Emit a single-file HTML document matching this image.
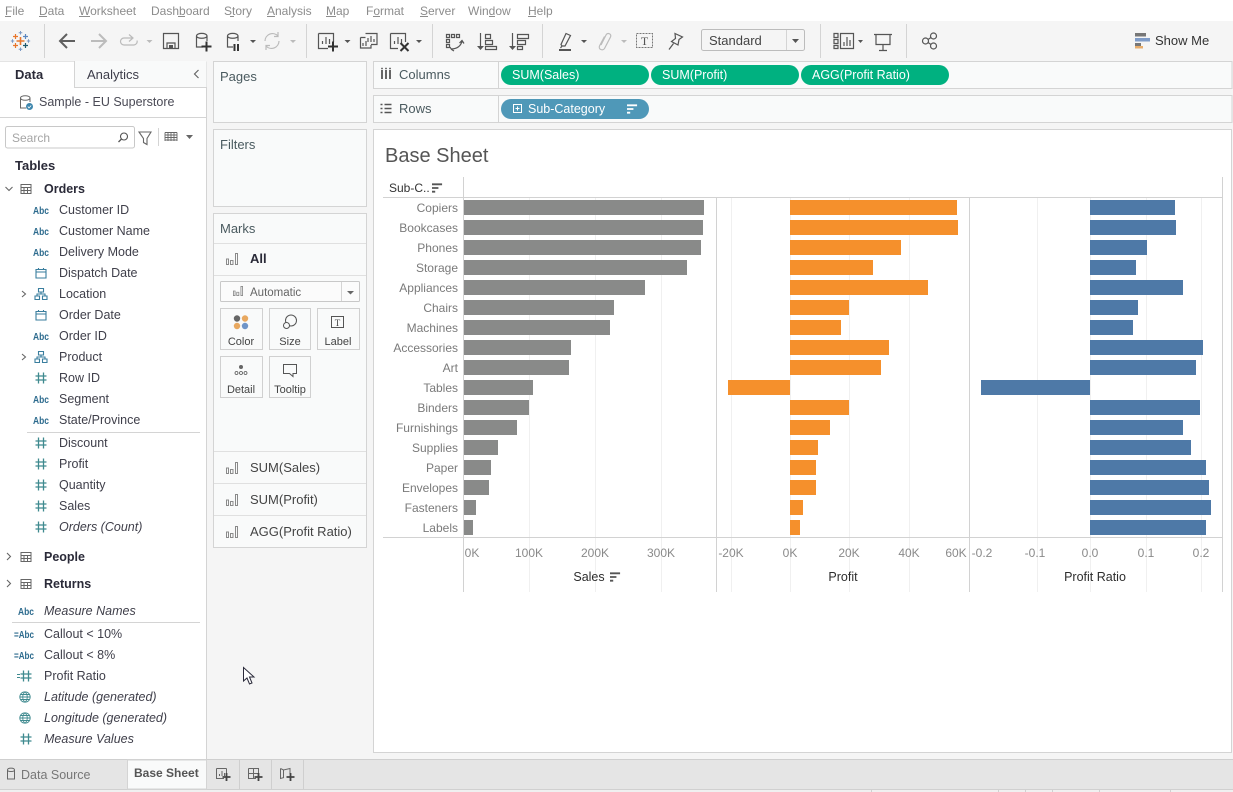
<!DOCTYPE html>
<html><head><meta charset="utf-8"><title>Base Sheet</title>
<style>
html,body{margin:0;padding:0;background:#f5f5f5;overflow:hidden}
svg{display:block}
text{font-family:"Liberation Sans",sans-serif;font-size:13px;fill:#444}
.m{font-size:12px;fill:#8c8c8c}
.f{font-size:12.5px;fill:#3f3f4a}
.i{font-style:italic}
.b{font-weight:bold;fill:#2a2a38}
.abc{font-size:10px;fill:#2d6b8e;font-weight:bold}
.cat{font-size:12px;fill:#7a7a7a;text-anchor:end}
.tk{font-size:12px;fill:#8a8a8a;text-anchor:middle}
.ax{font-size:12.5px;fill:#2e2e2e;text-anchor:middle}
.p{font-size:12.5px;fill:#fff}
.mk{font-size:11px;fill:#444;text-anchor:middle}
.ln{stroke:#d4d4d4;stroke-width:1;fill:none}
.gr{stroke:#f0f0f0;stroke-width:1}
.ic{fill:none;stroke:#555;stroke-width:1.2}
.lg{fill:none;stroke:#bbb;stroke-width:1.2}
</style></head><body>
<svg width="1233" height="792" viewBox="0 0 1233 792" xmlns="http://www.w3.org/2000/svg">
<defs>
<symbol id="hash" viewBox="0 0 12 12" overflow="visible"><path d="M3.500 .5V11.500M8.500 .5V11.500M.5 4H11.500M.5 8H11.500" fill="none" stroke="#3f8a8f" stroke-width="1.300"/></symbol>
<symbol id="cal" viewBox="0 0 12 12" overflow="visible"><path d="M1 2.500H11V11H1ZM1 5H11M3.500 1V3M8.500 1V3" fill="none" stroke="#3a7e9e" stroke-width="1.100"/></symbol>
<symbol id="hier" viewBox="0 0 12 12" overflow="visible"><path d="M3.500 .5H8.500V4H3.500ZM0 8H4.500V11.500H0ZM7.500 8H12V11.500H7.500ZM6 4V6M2 8V6H10V8" fill="none" stroke="#3a7e9e" stroke-width="1.100"/></symbol>
<symbol id="tbl" viewBox="0 0 12 12" overflow="visible"><path d="M1 1.500H11V10.500H1ZM1 4.500H11M1 7.500H11M4 4.500V10.500M7.500 4.500V10.500" fill="none" stroke="#666" stroke-width="1"/></symbol>
<symbol id="glb" viewBox="0 0 12 12" overflow="visible"><path d="M6 .8A5.200 5.200 0 1 0 6 11.200A5.200 5.200 0 1 0 6 .8ZM.8 6H11.200M6 .8C3 3.500 3 8.500 6 11.200C9 8.500 9 3.500 6 .8M1.500 3.500H10.500M1.500 8.500H10.500" fill="none" stroke="#3f8a8f" stroke-width=".9"/></symbol>
<symbol id="mbar" viewBox="0 0 12 12" overflow="visible"><path d="M.5 6H2.500V11.500H.5ZM4.500 7.500H7V11.500H4.500ZM9.500 .5H11.500V11.500H9.500Z" fill="none" stroke="#8a8a8a" stroke-width="1"/></symbol>
<symbol id="srt" viewBox="0 0 12 10" overflow="visible"><path d="M0 0H11V2H0ZM0 4H7V6H0ZM0 8H3.500V10H0Z" fill="currentColor"/></symbol>
</defs>

<!-- Base -->
<rect width="1233" height="792" fill="#f5f5f5"/>
<rect width="1233" height="21" fill="#fff"/>

<!-- Menu -->
<g class="menu">
<text class="m" x="5" y="15">File</text><path d="M5 16.500H11" stroke="#8c8c8c"/>
<text class="m" x="39" y="15">Data</text><path d="M39 16.500H47" stroke="#8c8c8c"/>
<text class="m" x="79" y="15">Worksheet</text><path d="M79 16.500H90" stroke="#8c8c8c"/>
<text class="m" x="151" y="15">Dashboard</text><path d="M178 16.500H185" stroke="#8c8c8c"/>
<text class="m" x="224" y="15">Story</text><path d="M230 16.500H234" stroke="#8c8c8c"/>
<text class="m" x="267" y="15">Analysis</text><path d="M267 16.500H275" stroke="#8c8c8c"/>
<text class="m" x="326" y="15">Map</text><path d="M326 16.500H336" stroke="#8c8c8c"/>
<text class="m" x="366" y="15">Format</text><path d="M373 16.500H380" stroke="#8c8c8c"/>
<text class="m" x="420" y="15">Server</text><path d="M420 16.500H428" stroke="#8c8c8c"/>
<text class="m" x="468" y="15">Window</text><path d="M489 16.500H495" stroke="#8c8c8c"/>
<text class="m" x="528" y="15">Help</text><path d="M528 16.500H536" stroke="#8c8c8c"/>
</g>

<!-- Toolbar separators -->
<path class="ln" d="M44.500 24V58M306.500 24V58M432.500 24V58M542.500 24V58M820.500 24V58M906.500 24V58"/>

<!-- Logo -->
<g fill="none">
<path d="M20.500 37V45M16.500 41H24.500" stroke="#e8762b" stroke-width="1.600"/>
<path d="M15.500 34V39M13 36.500H18M15.500 43V48M13 45.500H18" stroke="#e8762b" stroke-width="1.200"/>
<path d="M25.500 34V39M23 36.500H28" stroke="#5b87c0" stroke-width="1.200"/>
<path d="M25.500 43V48M23 45.500H28" stroke="#1f5a6e" stroke-width="1.200"/>
<path d="M20.500 31V34.500M18.700 32.700H22.300M20.500 47.500V51M18.700 49.300H22.300M12.500 39.300V42.700M10.800 41H14.200M28.500 39.300V42.700M26.800 41H30.200" stroke="#7b99c4" stroke-width="1"/>
</g>

<!-- Nav -->
<path d="M75 41H60M67 34L60 41L67 48" fill="none" stroke="#5f5f5f" stroke-width="2"/>
<path d="M91 41H106M99 34L106 41L99 48" fill="none" stroke="#bcbcbc" stroke-width="2"/>
<path class="lg" d="M132 38H124a3.500 3.500 0 0 0 0 7H134a3.500 3.500 0 0 0 3-4.500M129 34.500L133 38L129 41.500"/>
<path d="M146.500 40H152.500L149.500 43Z" fill="#bbb"/>
<!-- Save -->
<path class="ic" d="M163.500 33.500H178.500V48.500H163.500ZM167 48V43H175V48"/><rect x="169" y="45" width="4" height="3" fill="#555"/>
<!-- Add DS -->
<path class="ic" d="M196.500 36V47H203M207 36V41M196.500 36C196.500 32.500 207 32.500 207 36C207 39 196.500 39 196.500 36Z"/>
<path d="M206.500 41.500V51.500M201.500 46.500H211.500" stroke="#333" stroke-width="2"/>
<!-- Pause DS -->
<path class="ic" d="M227.500 36V47H233M238 36V41M227.500 36C227.500 32.500 238 32.500 238 36C238 39 227.500 39 227.500 36Z"/>
<path d="M234.500 44V51M238 44V51" stroke="#333" stroke-width="2"/>
<path d="M250 40H256L253 43Z" fill="#555"/>
<!-- Refresh -->
<path class="lg" d="M265 41a7.500 7.500 0 0 1 13-5M279 41a7.500 7.500 0 0 1-13 5M278 32V36.500H274M266 50V45.500H270"/>
<path d="M290 40H296L293 43Z" fill="#bbb"/>
<!-- New sheet -->
<path class="ic" d="M318.500 33.500H333.500V42M328 48.500H318.500V33.500M322.500 44V41M326 44V37M329.500 44V39"/>
<path d="M333 41.500V51.500M328 46.500H338" stroke="#333" stroke-width="2"/>
<path d="M344.500 40H350.500L347.500 43Z" fill="#555"/>
<!-- Duplicate -->
<path class="ic" d="M365.500 33.500H377V44.500H371M360.500 37.500H365.500M360.500 37.500V48H371V45M368 42V38M371 42V36M374 42V39M363 46V43M366 46V41"/>
<!-- Clear -->
<path class="ic" d="M390.500 33.500H405.500V42M398 48.500H390.500V33.500M394.500 44V41M398 44V37M401.500 44V39"/>
<path d="M400.500 43L408.500 51M408.500 43L400.500 51" stroke="#333" stroke-width="2"/>
<path d="M416 40H422L419 43Z" fill="#555"/>
<!-- Swap -->
<path class="ic" d="M446.500 34.500h3v3h-3zM451.500 34.500h3v3h-3zM456.500 34.500h3v3h-3zM446.500 39.500h3v3h-3zM446.500 44.500h3v3h-3zM451 49C457 49 461 46 462 41M459.500 43L462 40.500L464 43.500M450 47L451.500 49.500L454 51"/>
<!-- Sort asc -->
<path class="ic" d="M480.500 33V47"/><path d="M477 46H484L480.500 50Z" fill="#555"/>
<path class="ic" d="M485.500 34.500H490.500V38.500H485.500ZM485.500 40.500H492.500V44.500H485.500ZM485.500 46.500H496.500V49.500H485.500Z"/>
<!-- Sort desc -->
<path class="ic" d="M512.500 33V47"/><path d="M509 46H516L512.500 50Z" fill="#555"/>
<path class="ic" d="M517.500 34.500H528.500V38.500H517.500ZM517.500 40.500H525.500V44.500H517.500ZM517.500 46.500H522.500V49.500H517.500Z"/>
<!-- Highlight -->
<path class="ic" d="M562 46L561 44.500L566 33.500L570.500 35.500L565 46ZM562 46L560.500 48"/>
<rect x="559" y="49" width="12" height="2" fill="#555"/>
<path d="M581 40H587L584 43Z" fill="#555"/>
<!-- Clip -->
<path class="lg" d="M601 45L606 35C607.500 32 612 34 610.500 37L604.500 48.500C603 51 598 49.500 599.500 46L604.500 36.500"/>
<path d="M621 40H627L624 43Z" fill="#bbb"/>
<!-- T -->
<rect x="636.500" y="33.500" width="16" height="14" fill="none" stroke="#777" stroke-dasharray="2 1"/>
<text x="644.500" y="45" text-anchor="middle" style="font-family:'Liberation Serif',serif;font-size:12px;fill:#555">T</text>
<!-- Pin -->
<path class="ic" d="M675 33.500L682.500 37L679 39.500L678 45L671.500 41.500L675.500 38.500ZM673.500 43.500L669 49.500"/>
<!-- Standard -->
<rect x="701.500" y="29.500" width="103" height="21" rx="2" fill="#f5f5f5" stroke="#bcbcbc"/>
<path class="ln" d="M786.500 30V50"/>
<text x="709" y="45" style="fill:#444">Standard</text>
<path d="M792 39H799L795.500 43Z" fill="#555"/>
<!-- Fit -->
<path class="ic" d="M834 33.500h4v4h-4zM834 39.500h4v4h-4zM834 45.500h4v3h-4zM840.500 33.500H853.500V48.500H840.500ZM844 46V42M847 46V37M850 46V40"/>
<path d="M858 40H863L860.500 43Z" fill="#555"/>
<!-- Presentation -->
<path class="ic" d="M874 34.500H892M876 34.500V44.500H890V34.500M883 44.500V50M879 50.500H887"/>
<!-- Share -->
<g class="ic"><circle cx="925.500" cy="41" r="3"/><circle cx="933.500" cy="36" r="3"/><circle cx="933.500" cy="46" r="3"/><path d="M928 39.500L931 37.500M928 42.500L931 44.500"/></g>
<!-- Show Me -->
<rect x="1135" y="33" width="11" height="3.500" fill="#777"/>
<rect x="1135" y="38" width="15" height="3.500" fill="#7f9cc8"/>
<rect x="1135" y="43" width="6" height="3" fill="#777"/>
<rect x="1135" y="46" width="8" height="2.500" fill="#e8ad6b"/>
<text x="1155" y="45" style="fill:#333">Show Me</text>

<!-- Left panel -->
<rect x="0" y="61" width="206" height="698" fill="#fff"/>
<path d="M206.500 61V759" stroke="#d4d4d4"/>
<path d="M0 61.500H207" stroke="#e4e4e4"/>
<rect x="74.500" y="61" width="132" height="26" fill="#f9fafa"/>
<path class="ln" d="M74.500 61V87.500H206"/>
<text x="15" y="79" class="b" style="font-size:13px">Data</text>
<text x="87" y="79" style="fill:#3d3d4a">Analytics</text>
<path d="M198.500 70L194.500 74L198.500 78" fill="none" stroke="#666" stroke-width="1.200"/>
<!-- Source -->
<path d="M20.500 98V108H26M30 98V102M20.500 98C20.500 95 30 95 30 98C30 101 20.500 101 20.500 98Z" fill="none" stroke="#666"/>
<circle cx="29.500" cy="106.500" r="3.500" fill="#3d86ad"/>
<path d="M27.800 106.500L29 108L31.200 105.500" stroke="#fff" fill="none" stroke-width=".8"/>
<text x="39" y="106" style="font-size:12.500px;fill:#4a4a55">Sample - EU Superstore</text>
<path class="ln" d="M0 117.500H206"/>
<!-- Search -->
<rect x="5.500" y="126.500" width="129" height="21.500" rx="2" fill="#fff" stroke="#c8c8c8"/>
<text x="12" y="142" style="font-size:12px;fill:#a5a5a5">Search</text>
<circle cx="124" cy="136.500" r="3.500" fill="none" stroke="#555" stroke-width="1.100"/>
<path d="M121.500 139L118.500 142" fill="none" stroke="#555" stroke-width="1.300"/>
<path d="M139 132H151L147 138.500V144.500L143.500 142.500V138.500Z" fill="none" stroke="#666" stroke-width="1.100"/>
<path class="ln" d="M158.500 128V146"/>
<path d="M165 132.500H177M165 135H177M165 137.500H177M165 140H177M165 132.500V141M168 132.500V141M171 132.500V141M174 132.500V141M177 132.500V141" stroke="#666" stroke-width=".9" fill="none"/>
<path d="M186 135H193L189.500 139Z" fill="#666"/>
<text x="15" y="170" class="b" style="font-size:13px">Tables</text>
<path d="M5.500 187L9 190.500L12.500 187" fill="none" stroke="#666" stroke-width="1.100"/>
<use href="#tbl" x="20" y="183" width="12" height="12"/>
<text x="44" y="193" class="b" style="font-size:12.500px">Orders</text>

<!-- Fields -->
<text class="abc" x="33" y="214" textLength="16" lengthAdjust="spacingAndGlyphs">Abc</text><text class="f" x="59" y="214">Customer ID</text>
<text class="abc" x="33" y="235" textLength="16" lengthAdjust="spacingAndGlyphs">Abc</text><text class="f" x="59" y="235">Customer Name</text>
<text class="abc" x="33" y="256" textLength="16" lengthAdjust="spacingAndGlyphs">Abc</text><text class="f" x="59" y="256">Delivery Mode</text>
<use href="#cal" x="35" y="267" width="12" height="12"/><text class="f" x="59" y="277">Dispatch Date</text>
<path d="M22 291L25.500 294L22 297" fill="none" stroke="#666" stroke-width="1.100"/>
<use href="#hier" x="35" y="288" width="12" height="12"/><text class="f" x="59" y="298">Location</text>
<use href="#cal" x="35" y="309" width="12" height="12"/><text class="f" x="59" y="319">Order Date</text>
<text class="abc" x="33" y="340" textLength="16" lengthAdjust="spacingAndGlyphs">Abc</text><text class="f" x="59" y="340">Order ID</text>
<path d="M22 354L25.500 357L22 360" fill="none" stroke="#666" stroke-width="1.100"/>
<use href="#hier" x="35" y="351" width="12" height="12"/><text class="f" x="59" y="361">Product</text>
<use href="#hash" x="35" y="372" width="12" height="12"/><text class="f" x="59" y="382">Row ID</text>
<text class="abc" x="33" y="403" textLength="16" lengthAdjust="spacingAndGlyphs">Abc</text><text class="f" x="59" y="403">Segment</text>
<text class="abc" x="33" y="424" textLength="16" lengthAdjust="spacingAndGlyphs">Abc</text><text class="f" x="59" y="424">State/Province</text>
<path class="ln" d="M27 432.500H200"/>
<use href="#hash" x="35" y="437" width="12" height="12"/><text class="f" x="59" y="447">Discount</text>
<use href="#hash" x="35" y="458" width="12" height="12"/><text class="f" x="59" y="468">Profit</text>
<use href="#hash" x="35" y="479" width="12" height="12"/><text class="f" x="59" y="489">Quantity</text>
<use href="#hash" x="35" y="500" width="12" height="12"/><text class="f" x="59" y="510">Sales</text>
<use href="#hash" x="35" y="521" width="12" height="12"/><text class="f i" x="59" y="531">Orders (Count)</text>

<path d="M7 553L10.500 556.500L7 560" fill="none" stroke="#666" stroke-width="1.100"/>
<use href="#tbl" x="20" y="551" width="12" height="12"/>
<text x="44" y="561" class="b" style="font-size:12.500px">People</text>
<path d="M7 580L10.500 583.500L7 587" fill="none" stroke="#666" stroke-width="1.100"/>
<use href="#tbl" x="20" y="578" width="12" height="12"/>
<text x="44" y="588" class="b" style="font-size:12.500px">Returns</text>

<text class="abc" x="18" y="615" textLength="16" lengthAdjust="spacingAndGlyphs">Abc</text><text class="f i" x="44" y="615">Measure Names</text>
<path class="ln" d="M12 622.500H200"/>
<text class="abc" x="14" y="638" textLength="20" lengthAdjust="spacingAndGlyphs">=Abc</text><text class="f" x="44" y="638">Callout &lt; 10%</text>
<text class="abc" x="14" y="659" textLength="20" lengthAdjust="spacingAndGlyphs">=Abc</text><text class="f" x="44" y="659">Callout &lt; 8%</text>
<path d="M17 674.500H20M17 677.500H20" stroke="#3f8a8f"/>
<use href="#hash" x="20" y="670" width="12" height="12"/><text class="f" x="44" y="680">Profit Ratio</text>
<use href="#glb" x="19" y="691" width="12" height="12"/><text class="f i" x="44" y="701">Latitude (generated)</text>
<use href="#glb" x="19" y="712" width="12" height="12"/><text class="f i" x="44" y="722">Longitude (generated)</text>
<use href="#hash" x="20" y="733" width="12" height="12"/><text class="f i" x="44" y="743">Measure Values</text>

<!-- Cursor -->
<path d="M243.500 667.500V681L247 678L249.500 684L252 683L249.500 677L254 677Z" fill="#fff" stroke="#2a2a3a" stroke-width="1"/>

<!-- Cards -->
<rect x="213.500" y="61.500" width="153" height="61" fill="#f9fafa" stroke="#d4d4d4"/>
<text x="220" y="81" style="fill:#4a5a5f">Pages</text>
<rect x="213.500" y="129.500" width="153" height="77" fill="#f9fafa" stroke="#d4d4d4"/>
<text x="220" y="149" style="fill:#4a5a5f">Filters</text>
<rect x="213.500" y="213.500" width="153" height="334" fill="#f9fafa" stroke="#d4d4d4"/>
<text x="220" y="233" style="fill:#4a5a5f">Marks</text>
<path class="ln" d="M214 243.500H366M214 275.500H366M214 451.500H366M214 483.500H366M214 515.500H366" style="stroke:#e0e0e0"/>
<use href="#mbar" x="226" y="253" width="12" height="12"/>
<text x="250" y="263" class="b">All</text>
<rect x="220.500" y="281.500" width="139" height="20" rx="1" fill="#fbfbfb" stroke="#c8c8c8"/>
<path class="ln" d="M341.500 282V301"/>
<use href="#mbar" x="233" y="286" width="10" height="10"/>
<text x="250" y="296" style="font-size:11.500px;fill:#666">Automatic</text>
<path d="M347 291H354L350.500 294.500Z" fill="#666"/>
<g fill="#f9fafa" stroke="#d0d0d0">
<rect x="220.500" y="308.500" width="42" height="41"/><rect x="269.500" y="308.500" width="41" height="41"/><rect x="317.500" y="308.500" width="42" height="41"/>
<rect x="220.500" y="356.500" width="42" height="41"/><rect x="269.500" y="356.500" width="41" height="41"/>
</g>
<circle cx="237" cy="318.500" r="3.200" fill="#666"/><circle cx="245" cy="318.500" r="3.200" fill="#e8a860"/><circle cx="237" cy="326" r="3.200" fill="#e8a860"/><circle cx="245" cy="326" r="3.200" fill="#6f95c8"/>
<circle cx="291" cy="320.500" r="5.500" fill="none" stroke="#555"/><circle cx="286.500" cy="325.500" r="3" fill="#f9fafa" stroke="#555"/>
<rect x="331.500" y="316.500" width="12" height="11" fill="none" stroke="#555"/>
<text x="337.500" y="326" text-anchor="middle" style="font-family:'Liberation Serif',serif;font-size:9px;fill:#444">T</text>
<text class="mk" x="241" y="345">Color</text><text class="mk" x="290" y="345">Size</text><text class="mk" x="338" y="345">Label</text>
<circle cx="241" cy="367" r="2" fill="#666"/>
<circle cx="236.500" cy="373" r="1.500" fill="none" stroke="#555" stroke-width=".8"/><circle cx="241" cy="373" r="1.500" fill="none" stroke="#555" stroke-width=".8"/><circle cx="245.500" cy="373" r="1.500" fill="none" stroke="#555" stroke-width=".8"/>
<path d="M283.500 364.500H296.500V373.500H293V376.500L289.500 373.500H283.500Z" fill="none" stroke="#555"/>
<text class="mk" x="241" y="393">Detail</text><text class="mk" x="290" y="393">Tooltip</text>
<use href="#mbar" x="226" y="462" width="12" height="12"/><text x="250" y="472" style="fill:#444">SUM(Sales)</text>
<use href="#mbar" x="226" y="494" width="12" height="12"/><text x="250" y="504" style="fill:#444">SUM(Profit)</text>
<use href="#mbar" x="226" y="526" width="12" height="12"/><text x="250" y="536" style="fill:#444">AGG(Profit Ratio)</text>

<!-- Shelves -->
<rect x="373.500" y="61.500" width="858.500" height="27" fill="#f9fafa" stroke="#d4d4d4"/>
<rect x="373.500" y="95.500" width="858.500" height="27" fill="#f9fafa" stroke="#d4d4d4"/>
<path class="ln" d="M498.500 62V88M498.500 96V122"/>
<path d="M382 70V79M386 70V79M390 70V79" stroke="#555" stroke-width="1.800"/>
<circle cx="382" cy="68.500" r=".9" fill="#555"/><circle cx="386" cy="68.500" r=".9" fill="#555"/><circle cx="390" cy="68.500" r=".9" fill="#555"/>
<text x="399" y="79" style="fill:#4a5a5f">Columns</text>
<path d="M384.500 104.500H391.500M384.500 108.500H391.500M384.500 112.500H391.500" stroke="#555" stroke-width="1.500"/>
<path d="M380.500 104.500H382.500M380.500 108.500H382.500M380.500 112.500H382.500" stroke="#555" stroke-width="1.500"/>
<text x="399" y="113" style="fill:#4a5a5f">Rows</text>
<rect x="501" y="65" width="148" height="20" rx="10" fill="#00b180"/>
<rect x="651" y="65" width="148" height="20" rx="10" fill="#00b180"/>
<rect x="801" y="65" width="148" height="20" rx="10" fill="#00b180"/>
<text class="p" x="512" y="79">SUM(Sales)</text>
<text class="p" x="662" y="79">SUM(Profit)</text>
<text class="p" x="812" y="79">AGG(Profit Ratio)</text>
<rect x="501" y="99" width="148" height="20" rx="10" fill="#4f98b8"/>
<path d="M513.500 104.500H521.500V112.500H513.500ZM515.500 108.500H519.500M517.500 106.500V110.500" fill="none" stroke="#fff"/>
<text class="p" x="528" y="113">Sub-Category</text>
<use href="#srt" x="627" y="104" width="11" height="10" style="color:#fff"/>

<!-- View -->
<rect x="373.500" y="129.500" width="858" height="623" fill="#fff" stroke="#d4d4d4"/>
<text x="385" y="162" style="font-size:20px;fill:#555">Base Sheet</text>
<text x="389" y="192" style="font-size:12px;fill:#333">Sub-C..</text>
<use href="#srt" x="432" y="183" width="11" height="10" style="color:#555"/>

<!-- Grid -->
<g class="gr">
<path d="M529.500 198V592M595.500 198V592M661.500 198V592M731.500 198V592M790.500 198V592M849.500 198V592M909.500 198V592M1037.500 198V592M1090.500 198V592M1146.500 198V592M1201.500 198V592"/>
</g>

<!-- Bars -->
<g fill="#898a89">
<rect x="464" y="200" width="240" height="15"/><rect x="464" y="220" width="239" height="15"/><rect x="464" y="240" width="237" height="15"/><rect x="464" y="260" width="223" height="15"/><rect x="464" y="280" width="181" height="15"/><rect x="464" y="300" width="150" height="15"/><rect x="464" y="320" width="146" height="15"/><rect x="464" y="340" width="107" height="15"/><rect x="464" y="360" width="105" height="15"/><rect x="464" y="380" width="69" height="15"/><rect x="464" y="400" width="65" height="15"/><rect x="464" y="420" width="53" height="15"/><rect x="464" y="440" width="34" height="15"/><rect x="464" y="460" width="27" height="15"/><rect x="464" y="480" width="25" height="15"/><rect x="464" y="500" width="12" height="15"/><rect x="464" y="520" width="9" height="15"/>
</g>
<g fill="#f5902c">
<rect x="790" y="200" width="167" height="15"/><rect x="790" y="220" width="168" height="15"/><rect x="790" y="240" width="111" height="15"/><rect x="790" y="260" width="83" height="15"/><rect x="790" y="280" width="138" height="15"/><rect x="790" y="300" width="59" height="15"/><rect x="790" y="320" width="51" height="15"/><rect x="790" y="340" width="99" height="15"/><rect x="790" y="360" width="91" height="15"/><rect x="728" y="380" width="62" height="15"/><rect x="790" y="400" width="59" height="15"/><rect x="790" y="420" width="40" height="15"/><rect x="790" y="440" width="28" height="15"/><rect x="790" y="460" width="26" height="15"/><rect x="790" y="480" width="26" height="15"/><rect x="790" y="500" width="13" height="15"/><rect x="790" y="520" width="10" height="15"/>
</g>
<g fill="#4e79a7">
<rect x="1090" y="200" width="85" height="15"/><rect x="1090" y="220" width="86" height="15"/><rect x="1090" y="240" width="57" height="15"/><rect x="1090" y="260" width="46" height="15"/><rect x="1090" y="280" width="93" height="15"/><rect x="1090" y="300" width="48" height="15"/><rect x="1090" y="320" width="43" height="15"/><rect x="1090" y="340" width="113" height="15"/><rect x="1090" y="360" width="106" height="15"/><rect x="981" y="380" width="109" height="15"/><rect x="1090" y="400" width="110" height="15"/><rect x="1090" y="420" width="93" height="15"/><rect x="1090" y="440" width="101" height="15"/><rect x="1090" y="460" width="116" height="15"/><rect x="1090" y="480" width="119" height="15"/><rect x="1090" y="500" width="121" height="15"/><rect x="1090" y="520" width="116" height="15"/>
</g>

<!-- Axes lines -->
<path d="M383 197.500H1222.500M383 537.500H1222.500M463.500 177V592M716.500 197V592M969.500 197V592M1222.500 177V592" stroke="#d2d2d2" fill="none"/>

<!-- Category labels -->
<text class="cat" x="458" y="212">Copiers</text>
<text class="cat" x="458" y="232">Bookcases</text>
<text class="cat" x="458" y="252">Phones</text>
<text class="cat" x="458" y="272">Storage</text>
<text class="cat" x="458" y="292">Appliances</text>
<text class="cat" x="458" y="312">Chairs</text>
<text class="cat" x="458" y="332">Machines</text>
<text class="cat" x="458" y="352">Accessories</text>
<text class="cat" x="458" y="372">Art</text>
<text class="cat" x="458" y="392">Tables</text>
<text class="cat" x="458" y="412">Binders</text>
<text class="cat" x="458" y="432">Furnishings</text>
<text class="cat" x="458" y="452">Supplies</text>
<text class="cat" x="458" y="472">Paper</text>
<text class="cat" x="458" y="492">Envelopes</text>
<text class="cat" x="458" y="512">Fasteners</text>
<text class="cat" x="458" y="532">Labels</text>

<!-- Ticks -->
<text class="tk" x="472" y="557">0K</text>
<text class="tk" x="529" y="557">100K</text>
<text class="tk" x="595" y="557">200K</text>
<text class="tk" x="661" y="557">300K</text>
<text class="tk" x="731" y="557">-20K</text>
<text class="tk" x="790" y="557">0K</text>
<text class="tk" x="849" y="557">20K</text>
<text class="tk" x="909" y="557">40K</text>
<text class="tk" x="956" y="557">60K</text>
<text class="tk" x="982" y="557">-0.2</text>
<text class="tk" x="1035" y="557">-0.1</text>
<text class="tk" x="1090" y="557">0.0</text>
<text class="tk" x="1146" y="557">0.1</text>
<text class="tk" x="1201" y="557">0.2</text>
<text class="ax" x="589" y="581">Sales</text>
<use href="#srt" x="610" y="572" width="11" height="10" style="color:#555"/>
<text class="ax" x="843" y="581">Profit</text>
<text class="ax" x="1095" y="581">Profit Ratio</text>

<!-- Bottom -->
<rect x="0" y="759.500" width="1233" height="30" fill="#e5e5e5"/>
<path class="ln" d="M0 759.500H1233" style="stroke:#cfcfcf"/>
<path d="M0 789.500H1233" stroke="#d0d0d0"/>
<rect x="0" y="790" width="1233" height="2" fill="#f0f0f0"/>
<rect x="127.500" y="760" width="79" height="29" fill="#f9fafa" stroke="#d4d4d4"/>
<path d="M7.500 770V779H14.500V770M7.500 770C7.500 767.500 14.500 767.500 14.500 770C14.500 772 7.500 772 7.500 770Z" fill="none" stroke="#666"/>
<text x="21" y="779" style="font-size:12.500px;fill:#777">Data Source</text>
<text x="134" y="777" style="font-size:12px;font-weight:bold;fill:#555">Base Sheet</text>
<path class="ln" d="M239.500 760V789M271.500 760V789M303.500 760V789" style="stroke:#cfcfcf"/>
<path d="M216.500 768.500H226.500M216.500 768.500V778.500H224M226.500 768.500V774M219.500 776V774M222 776V771M224.500 776V773" fill="none" stroke="#666"/>
<path d="M226.500 773V781M222.500 777H230.500" stroke="#444" stroke-width="1.800"/>
<path d="M248.500 768.500H258.500V774M248.500 768.500V778.500H256M248.500 773.500H258.500M253.500 768.500V778.500" fill="none" stroke="#666"/>
<path d="M258.500 773V781M254.500 777H262.500" stroke="#444" stroke-width="1.800"/>
<path d="M280.500 768.500L283.500 770L290 768.500V774M280.500 768.500V778.500L284 777.500M283.500 770V778" fill="none" stroke="#666"/>
<path d="M290.500 773V781M286.500 777H294.500" stroke="#444" stroke-width="1.800"/>
<path d="M871.500 789V792M998.500 789V792M1025.500 789V792M1052.500 789V792M1099.500 789V792M1170.500 789V792" stroke="#d0d0d0"/>
</svg>
</body></html>
